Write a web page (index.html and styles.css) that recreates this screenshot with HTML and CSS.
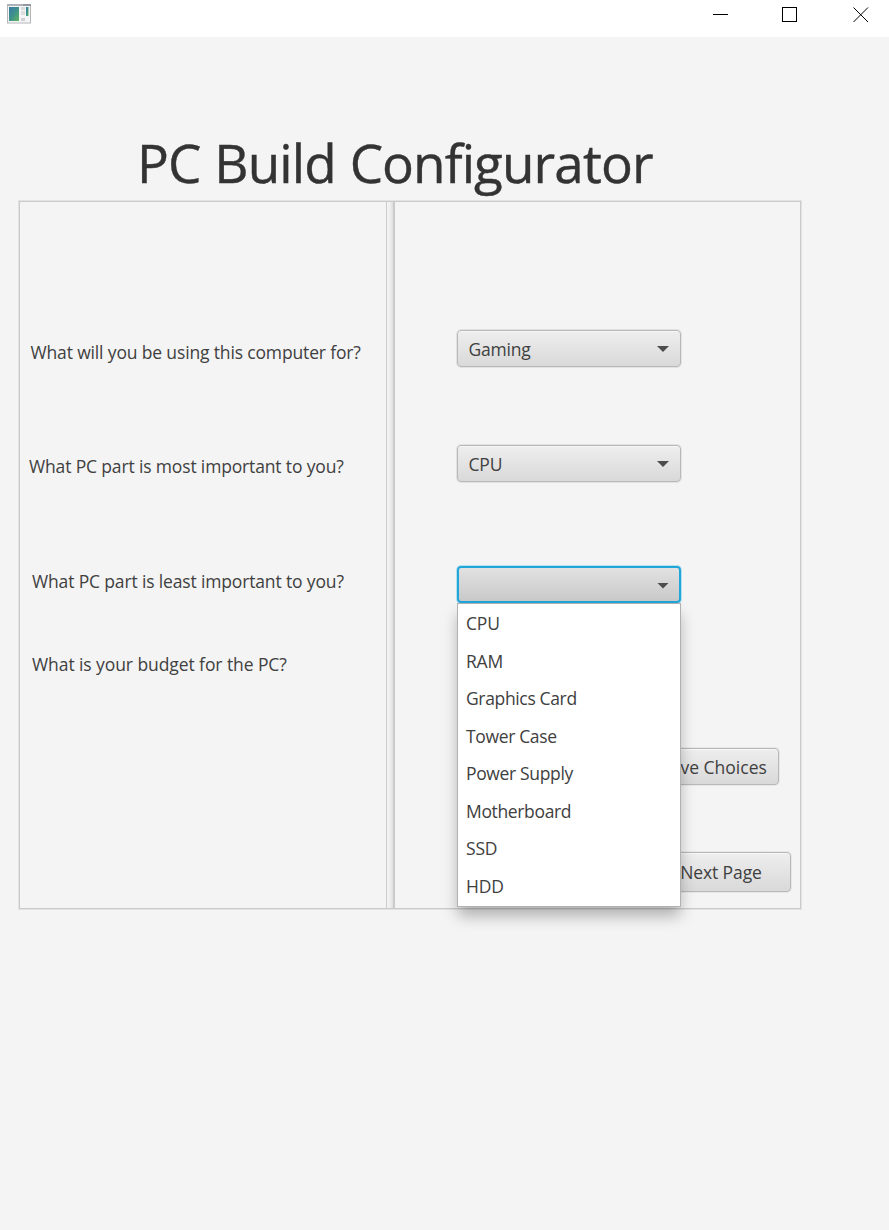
FILE: index.html
```html
<!DOCTYPE html>
<html lang="en">
<head>
<meta charset="utf-8">
<title>PC Build Configurator</title>
<link rel="stylesheet" href="styles.css">
</head>
<body>
<header class="titlebar">
  <svg class="app-icon" width="24" height="20" viewBox="0 0 24 20">
    <defs>
      <linearGradient id="pane" x1="0" y1="0" x2="1" y2="1"><stop offset="0" stop-color="#3878a4"/><stop offset=".5" stop-color="#3f918c"/><stop offset="1" stop-color="#63b55e"/></linearGradient>
    </defs>
    <rect x=".5" y=".5" width="23" height="18.5" fill="#f4f5f6" stroke="#b4b6ba"/>
    <rect x="0" y="0" width="16" height="2" fill="#adb1b9"/><rect x="16" y="0" width="8" height="2" fill="#9297a1"/>
    <rect x="2" y="3" width="10" height="14" fill="url(#pane)"/>
    <rect x="14" y="3" width="4" height="3" fill="#dadada"/><rect x="14" y="7" width="4" height="4" fill="#dddddd"/><rect x="14" y="14" width="4" height="3" fill="#d0d0d0"/>
    <rect x="19" y="3" width="2.5" height="9" fill="url(#pane)"/>
  </svg>
  <svg class="controls" width="160" height="37" viewBox="0 0 160 37" fill="none" stroke="#000" shape-rendering="crispEdges">
    <path d="M4 14.5h15M73.5 7.5h14v14h-14z"/><path d="M144.500 7.500l14.500 14.500M159 7.500l-14.500 14.500" shape-rendering="auto"/>
  </svg>
</header>
<main class="content">
  <h1 class="title">PC Build Configurator</h1>
  <div class="split">
    <section class="questions">
      <p class="q q-use">What will you be using this computer for?</p>
      <p class="q q-most">What PC part is most important to you?</p>
      <p class="q q-least">What PC part is least important to you?</p>
      <p class="q q-budget">What is your budget for the PC?</p>
    </section>
    <div class="divider"></div>
    <section class="answers">
      <div class="combo combo-use"><span>Gaming</span><i class="arrow"></i></div>
      <div class="combo combo-most"><span>CPU</span><i class="arrow"></i></div>
      <div class="combo combo-least"><span></span><i class="arrow"></i>
        <ul class="menu">
          <li>CPU</li>
          <li>RAM</li>
          <li class="tight">Graphics Card</li>
          <li class="tight">Tower Case</li>
          <li class="tight">Power Supply</li>
          <li class="tight">Motherboard</li>
          <li>SSD</li>
          <li>HDD</li>
        </ul>
      </div>
      <div class="budget"></div>
      <button class="btn save">Save Choices</button>
      <button class="btn next">Next Page</button>
    </section>
  </div>
</main>
</body>
</html>
```
FILE: styles.css
```css
* { box-sizing: border-box; }
body {
  margin: 0;
  height: 1230px;
  overflow: hidden;
  background: #f4f4f4;
  color: #404040;
  font: 17.5px/24px "Open Sans", "Noto Sans", sans-serif;
}
.titlebar { display: flex; justify-content: space-between; height: 37px; padding: 4px 20px 0 7px; background: #fff; }
.controls { flex-shrink: 0; margin-top: -4px; }
.title {
  margin: 0; padding: 89px 0 0 137px; height: 164px;
  color: #333; font-size: 53px; line-height: 74px; font-weight: 400; letter-spacing: -.9px; word-spacing: 1px; white-space: nowrap;
  -webkit-text-stroke: .4px #333;
}
.split { display: flex; width: 782px; height: 708px; margin-left: 19px; border: 1px solid #cbcbcb; box-shadow: 0 0 0 1px #e2e2e2; }
.questions { width: 366px; flex-shrink: 0; }
.q { margin: 0; white-space: nowrap; letter-spacing: -.15px; }
.q-use { padding: 138px 0 0 10.500px; }
.q-most { padding: 90px 0 0 9px; }
.q-least { padding: 91px 0 0 12px; }
.q-budget { padding: 59px 0 0 12px; letter-spacing: -.08px; }
.divider { width: 9px; flex-shrink: 0; border: solid #cbcbcb; border-width: 0 2px 0 1px; background: linear-gradient(90deg, #f4f4f4, #eee 50%, #dedede); }
.answers { display: flex; flex-direction: column; align-items: flex-start; flex: 1; padding: 128px 9px 0 62px; }
.combo {
  position: relative; display: flex; flex-shrink: 0; align-items: center; justify-content: space-between;
  width: 224px; height: 37px; padding: 1px 11px 0 10.500px;
  border: 1px solid #b8b8b8; border-radius: 4px; letter-spacing: -.2px;
  background: linear-gradient(#eee, #d9d9d9); box-shadow: inset 0 1px #f6f6f6, 0 0 0 1px rgba(0, 0, 0, .07);
}
.combo-most { margin-top: 78px; }
.combo-least { margin-top: 84px; padding: 2px 10px 0 10px; border: 2px solid #20a6d9; background: linear-gradient(#e1e1e1, #c9c9c9); box-shadow: 0 0 0 1px #b5e0ef; }
.arrow { width: 12px; height: 6px; background: #4d4d4d; clip-path: polygon(0 0, 100% 0, 50% 100%); }
.menu {
  position: absolute; z-index: 2; left: -2px; top: 35px; width: 224px; height: 304px; margin: 0; padding: 1px 0 0 8px;
  border: 1px solid #b1b1b1; background: #fff; list-style: none;
  box-shadow: 0 10px 14px -1px rgba(0, 0, 0, .28);
}
.menu li { height: 37.500px; line-height: 37px; }
.menu .tight { letter-spacing: -.35px; }
.budget { flex-shrink: 0; width: 224px; height: 34px; margin-top: 51px; border: 1px solid #c8c8c8; border-radius: 4px; background: #fff; }
.btn {
  flex-shrink: 0; align-self: flex-end; padding: 0; font: inherit; color: #404040; white-space: nowrap;
  border: 1px solid #b8b8b8; border-radius: 4px; background: linear-gradient(#eee, #d9d9d9); box-shadow: inset 0 1px #f6f6f6, 0 0 0 1px rgba(0, 0, 0, .05);
}
.save { width: 130px; height: 37px; margin: 60px 12px 0 0; }
.next { width: 140px; height: 40px; margin-top: 67px; letter-spacing: -.1px; }
```
